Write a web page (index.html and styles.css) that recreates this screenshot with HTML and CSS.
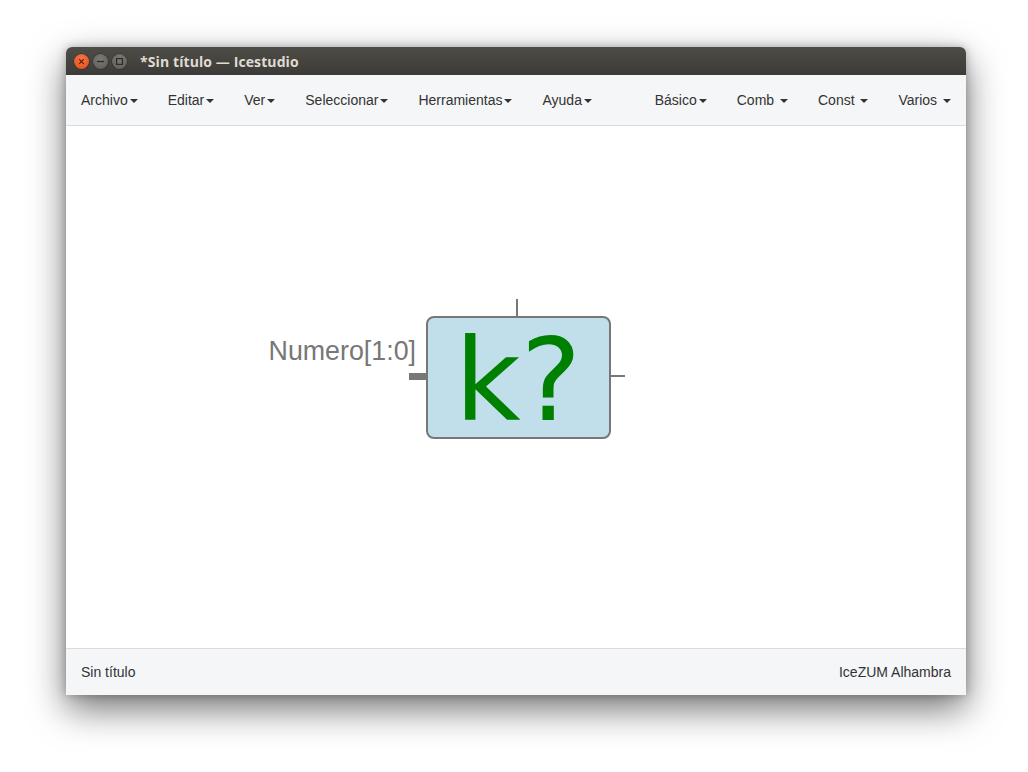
FILE: index.html
```html
<!DOCTYPE html>
<html>
<head>
<meta charset="utf-8">
<link rel="stylesheet" href="styles.css">
</head>
<body>
<div class="desktop">
  <div class="window">
    <div class="titlebar">
      <div class="wbtns">
        <span class="wbtn close"><svg width="15" height="15" viewBox="0 0 15 15"><path d="M5.2 5.2 L9.8 9.8 M9.8 5.2 L5.2 9.8" stroke="#5a1a08" stroke-width="1.2"/></svg></span>
        <span class="wbtn"><svg width="15" height="15" viewBox="0 0 15 15"><path d="M4 7.5 H11" stroke="#2c2b28" stroke-width="1.3"/></svg></span>
        <span class="wbtn"><svg width="15" height="15" viewBox="0 0 15 15"><rect x="4.6" y="4.6" width="5.8" height="5.8" fill="none" stroke="#2c2b28" stroke-width="1.2"/></svg></span>
      </div>
      <div class="wtitle">*Sin título — Icestudio</div>
    </div>
    <div class="menubar">
      <ul class="menu">
        <li>Archivo<span class="caret"></span></li>
        <li>Editar<span class="caret"></span></li>
        <li>Ver<span class="caret"></span></li>
        <li>Seleccionar<span class="caret"></span></li>
        <li>Herramientas<span class="caret"></span></li>
        <li>Ayuda<span class="caret"></span></li>
      </ul>
      <ul class="menu">
        <li>Básico<span class="caret"></span></li>
        <li>Comb <span class="caret"></span></li>
        <li>Const <span class="caret"></span></li>
        <li>Varios <span class="caret"></span></li>
      </ul>
    </div>
    <div class="canvas">
      <svg class="diagram" width="900" height="522" viewBox="0 0 900 522">
        <text class="plabel" x="350" y="234" text-anchor="end">Numero[1:0]</text>
        <rect x="343" y="247" width="18" height="7" fill="#777"/>
        <line x1="451" y1="173" x2="451" y2="190" stroke="#777" stroke-width="2"/>
        <line x1="544" y1="250" x2="559" y2="250" stroke="#777" stroke-width="2"/>
        <rect x="361" y="191" width="183" height="121" rx="7" fill="#c0dfea" stroke="#777" stroke-width="2"/>
        <text class="ktext" x="452" y="294" text-anchor="middle">k?</text>
      </svg>
    </div>
    <div class="footer">
      <span>Sin título</span>
      <span>IceZUM Alhambra</span>
    </div>
  </div>
</div>
</body>
</html>
```
FILE: styles.css
```css
html, body { margin: 0; padding: 0; background: #ffffff; }
body { width: 1028px; height: 772px; overflow: hidden; font-family: "Liberation Sans", Arial, sans-serif; }
.desktop { padding: 47px 62px 0 66px; }
.window {
  width: 900px; height: 648px; display: flex; flex-direction: column;
  border-radius: 6px 6px 0 0; background: #fff;
  box-shadow: 0 14px 36px rgba(0,0,0,0.55), 0 0 10px rgba(0,0,0,0.25);
}
.titlebar {
  height: 28px; display: flex; align-items: center;
  background: linear-gradient(#4e4c46, #3c3b37);
  border-radius: 6px 6px 0 0; padding-left: 8px;
}
.wbtns { display: flex; gap: 4px; }
.wbtn {
  width: 15px; height: 15px; border-radius: 50%; display: block;
  background: radial-gradient(circle at 50% 35%, #7d7b74, #5b5a55);
  box-shadow: 0 0 0 0.5px #2e2d2a;
}
.wbtn svg { display: block; }
.wbtn.close { background: radial-gradient(circle at 50% 35%, #f6774a, #df4a16); }
.wtitle {
  margin-left: 13px; color: #dfdbd2; font-family: "Open Sans", "DejaVu Sans", sans-serif;
  font-weight: 700; font-size: 14px; letter-spacing: 0.1px;
}
.menubar {
  height: 50px; background: #f5f6f7; border-bottom: 1px solid #d9dbde;
  display: flex; justify-content: space-between; align-items: center;
}
.menu { list-style: none; margin: 0; padding: 0; display: flex; }
.menu li {
  padding: 0 15px; font-size: 14px; color: #333; line-height: 50px; white-space: pre;
}
.caret {
  display: inline-block; width: 0; height: 0; margin-left: 2px; vertical-align: middle;
  border-top: 4px solid #333; border-left: 4px solid transparent; border-right: 4px solid transparent;
}
.canvas { flex: 1; position: relative; background: #fff; }
.diagram { display: block; }
.plabel { font-family: "Liberation Sans", Arial, sans-serif; font-size: 26.8px; fill: #777; }
.ktext { font-family: "DejaVu Sans", sans-serif; font-size: 114px; fill: #008000; }
.footer {
  height: 46px; background: #f5f6f7; border-top: 1px solid #d9dbde;
  display: flex; justify-content: space-between; align-items: center;
  padding: 0 15px; font-size: 14px; color: #333;
}
```
